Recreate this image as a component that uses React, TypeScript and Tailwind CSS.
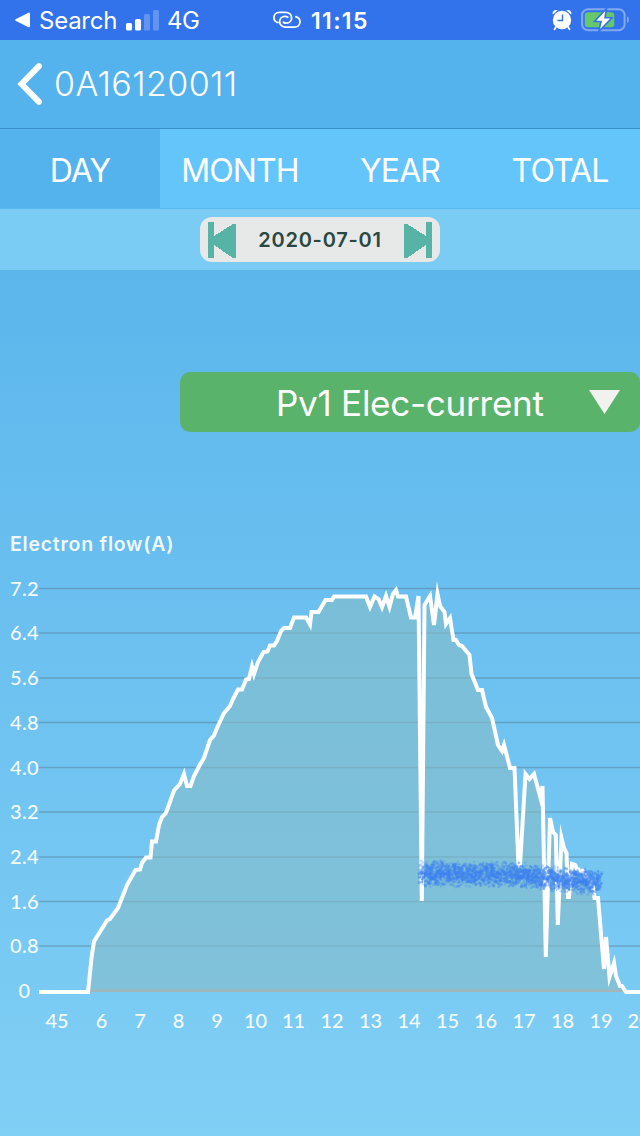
import React from 'react';

const LINE: [number, number][] = [
  [39, 992], [88, 992], [91.5, 958], [94, 941.5], [107, 920.5], [110, 919], [118, 908], [127, 885], [135.5, 870],
  [140, 869.5], [142, 863], [146, 857.5], [150.5, 857.5], [152, 841.5], [156, 841.5], [159, 825], [162, 817],
  [166, 813], [174, 790.5], [180, 784], [184, 774], [187, 786], [190.5, 786], [194, 776], [200, 764.5], [204, 758],
  [210, 740], [214, 735.5], [217, 728], [224, 713], [230, 706], [233, 699], [238, 689.5], [242, 689.5], [246, 679.5],
  [249, 679], [252, 666.5], [254, 674], [258, 662], [263.5, 652], [267.5, 651.5], [270, 645.5], [274, 645.5],
  [277, 641], [281, 631], [284, 628], [290, 628], [294, 617.5], [306, 617.5], [310, 624.5], [311.5, 612], [318.5, 612],
  [325.5, 600], [332, 600], [334, 596.5], [366, 596.5], [370, 607], [374.5, 596.5], [378.5, 599], [382, 607],
  [386, 596], [389.5, 607], [393, 594], [396, 590], [398, 596.5], [406, 596.5], [411, 617.5], [415, 617.5],
  [418.5, 596], [421.8, 901], [424.5, 605], [430, 596], [434, 625], [437.5, 594], [440, 606], [444.5, 612],
  [446, 624], [450, 618], [453.5, 640], [456, 640], [459, 645], [462, 646], [469.5, 655], [471.5, 674], [478, 690],
  [482, 690], [486, 707], [492, 718], [498, 745], [502, 751], [504, 745], [510, 768], [514.5, 768], [518.5, 866],
  [520, 866], [525.5, 774], [529.5, 779], [534, 774], [540.5, 798], [542.5, 786], [545.8, 957], [550, 818],
  [553, 832], [555.8, 835], [557.8, 925], [561.5, 838], [564, 848], [566.5, 853], [568, 897], [569, 897],
  [572, 864], [575, 865], [577, 869], [583, 871], [587, 878], [592, 881], [594.5, 898], [598, 898],
  [604, 969], [606, 937], [609.5, 977], [614, 963], [616, 976], [620, 986], [622, 986], [626, 992], [641, 992],
];

const GRID: [string, number][] = [
  ['7.2', 588.5], ['6.4', 633], ['5.6', 678], ['4.8', 722.5], ['4.0', 767.5],
  ['3.2', 812], ['2.4', 857], ['1.6', 901.5], ['0.8', 946],
];

const HOURS: [string, number][] = [
  ['45', 57], ['6', 101.5], ['7', 140], ['8', 178.5], ['9', 217], ['10', 255.5], ['11', 293.5], ['12', 332],
  ['13', 370.5], ['14', 409], ['15', 447.5], ['16', 485.5], ['17', 524], ['18', 562.5], ['19', 601], ['20', 639],
];

// Deterministic spray pattern along a slowly descending band
function spray() {
  let seed = 7;
  const rnd = () => {
    seed = (seed * 16807) % 2147483647;
    return seed / 2147483647;
  };
  const dots: { x: number; y: number; r: number; o: number }[] = [];
  for (let i = 0; i < 2300; i++) {
    const t = rnd();
    const mid = t < 0.5 ? 873.5 + t * 2 : 874.5 + (t - 0.5) * 17;
    dots.push({
      x: 420.5 + t * 180 + (rnd() - 0.5) * 5,
      y: mid + (rnd() + rnd() - 1) * 13.5,
      r: 0.9 + rnd() * 0.9,
      o: 0.2 + rnd() * 0.3,
    });
  }
  return dots;
}
const DOTS = spray();
const POINTS = LINE.map((p) => p.join(',')).join(' ');

function StatusBar() {
  return (
    <div className="flex h-10 items-center bg-[#3273ec] text-white">
      <svg className="ml-3.5 h-4 w-4" viewBox="0 0 16 16" fill="#fff">
        <path d="M1.6 7.3 14.5.7Q16 .2 16 1.7V14.3Q16 15.8 14.5 15.2L1.6 8.7Q.4 8 1.6 7.3Z" />
      </svg>
      <span className="ml-[9px] w-[87px] pt-0.5 text-[24px] leading-10 tracking-[-0.25px]">Search</span>
      <svg className="h-[22px] w-[33px] shrink-0" viewBox="0 0 33 22">
        <rect x="0" y="14" width="6" height="7.5" rx="1.5" fill="#fff" />
        <rect x="9" y="10" width="6" height="11.5" rx="1.5" fill="#fff" />
        <rect x="18" y="5" width="6" height="16.5" rx="1.5" fill="#6394f2" />
        <rect x="27" y="1" width="6" height="20.5" rx="1.5" fill="#6394f2" />
      </svg>
      <span className="ml-2 w-[106px] pt-0.5 text-[24px] leading-10 tracking-[-0.5px]">4G</span>
      <svg className="h-[18px] w-7 shrink-0" viewBox="0 0 28 18" fill="none" stroke="#fff" strokeWidth="1.8" strokeLinecap="round">
        <path d="M5 11.600C2.400 10.800 .9 9 .9 6.700.9 3.600 3.200 1.400 6.400 1.400H12.500C16 1.400 18.600 3.600 18.600 6.900 18.600 10 16.200 12.200 13.300 12.200 12.200 12.200 11.200 11.900 10.400 11.200" />
        <path d="M22.800 5.700C25.400 6.500 27 8.400 27 10.800 27 14 24.600 16.200 21.400 16.200H13C9.200 16.200 6.600 14 6.600 10.700 6.600 7.600 9 5.300 12 5.300 13.100 5.300 14 5.600 14.800 6.200" />
      </svg>
      <span className="ml-[10px] w-[241px] pt-0.5 text-[23px] font-semibold leading-10 tracking-[1.35px]">11:15</span>
      <svg className="h-[22px] w-5 shrink-0" viewBox="0 0 20 22">
        <path d="M4 18 2.500 20.300M16 18l1.500 2.300" stroke="#fff" strokeWidth="1.800" strokeLinecap="round" />
        <path d="M.8 5.600C-.2 2.400 2.400 0 5.800 1.200ZM19.200 5.600C20.200 2.400 17.600 0 14.200 1.200Z" fill="#fff" />
        <circle cx="10" cy="11" r="9.200" fill="#fff" />
        <path d="M10.500 5.500V11.500H5.500" fill="none" stroke="#3273ec" strokeWidth="1.400" />
      </svg>
      <svg className="ml-[9px] h-6 w-12 shrink-0" viewBox="0 0 48 24">
        <rect x="1.100" y="1.300" width="42.500" height="21" rx="6" fill="none" stroke="#83a9f4" strokeWidth="2" />
        <rect x="3.800" y="4.300" width="29.500" height="15" rx="3" fill="#66c76c" />
        <path d="M46 8.500Q48 9 48 11.800T46 15Z" fill="#83a9f4" />
        <path d="M25.500 .5 13.500 13.500H20L17.800 23.500 31 9.700H24Z" fill="#fff" stroke="#3273ec" strokeWidth="1.600" />
      </svg>
    </div>
  );
}

function Chart() {
  return (
    <svg className="block h-[626px] w-[640px]" viewBox="0 510 640 626" fill="none">
      <text x="10" y="551" fill="#fff" fillOpacity=".93" fontSize="19.500" fontWeight="600" className="font-['Inter',sans-serif]" textLength="163.500">Electron flow(A)</text>
      {GRID.map(([label, y]) => (
        <g key={label}>
          <path d={`M39 ${y}H640`} stroke="#5b8098" strokeOpacity=".52" strokeWidth="1.700" />
          <text x="10" y={y + 7} fill="#fff" fillOpacity=".94" fontSize="20" fontWeight="500" className="font-['Lato',sans-serif]" textLength="28.500">{label}</text>
        </g>
      ))}
      <polygon points={`${POINTS} 641,992 39,992`} fill="#86bdc8" fillOpacity=".6" />
      <path d="M88 990.800H624" stroke="#a2b5b8" strokeWidth="2.500" />
      <text x="18.500" y="998" fill="#fff" fillOpacity=".94" fontSize="20" fontWeight="500" className="font-['Lato',sans-serif]">0</text>
      <polyline points={POINTS} stroke="#fff" strokeWidth="4" strokeLinejoin="miter" strokeMiterlimit="8" />
      {DOTS.map((d, i) => (
        <circle key={i} cx={d.x} cy={d.y} r={d.r} fill="#3f82f0" fillOpacity={d.o} />
      ))}
      {HOURS.map(([label, x]) => (
        <text key={label} x={x} y="1028" textAnchor="middle" fill="#fff" fillOpacity=".94" fontSize="20" fontWeight="500" className="font-['Lato',sans-serif]">{label}</text>
      ))}
    </svg>
  );
}

export default function App() {
  return (
    <div className="flex h-[1136px] w-[640px] flex-col overflow-hidden bg-linear-to-b from-[#50aee9] to-[#80cff5] font-['Inter',sans-serif] text-white">
      <StatusBar />
      <header className="flex h-[89px] items-center border-b border-[#398fc9] bg-[#54b2ed]">
        <svg className="ml-[17px] h-[42px] w-[26px]" viewBox="0 0 26 42" fill="none" stroke="#fff" strokeWidth="6" strokeLinecap="round" strokeLinejoin="miter">
          <path d="M22 3.200 4.500 21 22 38.800" />
        </svg>
        <h1 className="ml-[11px] text-[34px] font-[350] leading-none tracking-[0.4px]">0A16120011</h1>
      </header>
      <nav className="grid h-20 grid-cols-4 border-b border-[#5bbaf1] bg-[#64c5fb] text-[32px] font-[370] tracking-[-0.9px]">
        <button className="bg-[#54b2ed] pt-1">DAY</button>
        <button className="pt-1">MONTH</button>
        <button className="pt-1">YEAR</button>
        <button className="pt-1">TOTAL</button>
      </nav>
      <div className="flex h-[61px] items-center justify-center bg-[#7accf5]">
        <div className="flex h-[45px] w-60 items-center justify-between rounded-xl bg-[#e7e8e8] px-2">
          <svg className="h-9 w-7" viewBox="0 0 28 36" fill="#58b3a7" shapeRendering="crispEdges">
            <path d="M0 0H6V14L25 2H28V36H25L6 23V36H0Z" />
          </svg>
          <span className="text-[20px] font-semibold tracking-[0.75px] text-[#29483f]">2020-07-01</span>
          <svg className="h-9 w-7" viewBox="0 0 28 36" fill="#58b3a7" shapeRendering="crispEdges">
            <path d="M28 0H22V14L3 2H0V36H3L22 23V36H28Z" />
          </svg>
        </div>
      </div>
      <main className="flex flex-1 flex-col">
        <button className="mb-[78px] ml-auto mt-[102px] flex h-[60px] w-[460px] shrink-0 items-center justify-between rounded-[10px] bg-[#59b36b] pl-24 pr-5">
          <span className="pt-0.5 text-[35px] font-[370] leading-none tracking-[-0.25px]">Pv1 Elec-current</span>
          <svg className="h-6 w-[31px]" viewBox="0 0 31 24" fill="#f1f1ef">
            <path d="M0 0H31L15.500 24Z" />
          </svg>
        </button>
        <Chart />
      </main>
    </div>
  );
}
